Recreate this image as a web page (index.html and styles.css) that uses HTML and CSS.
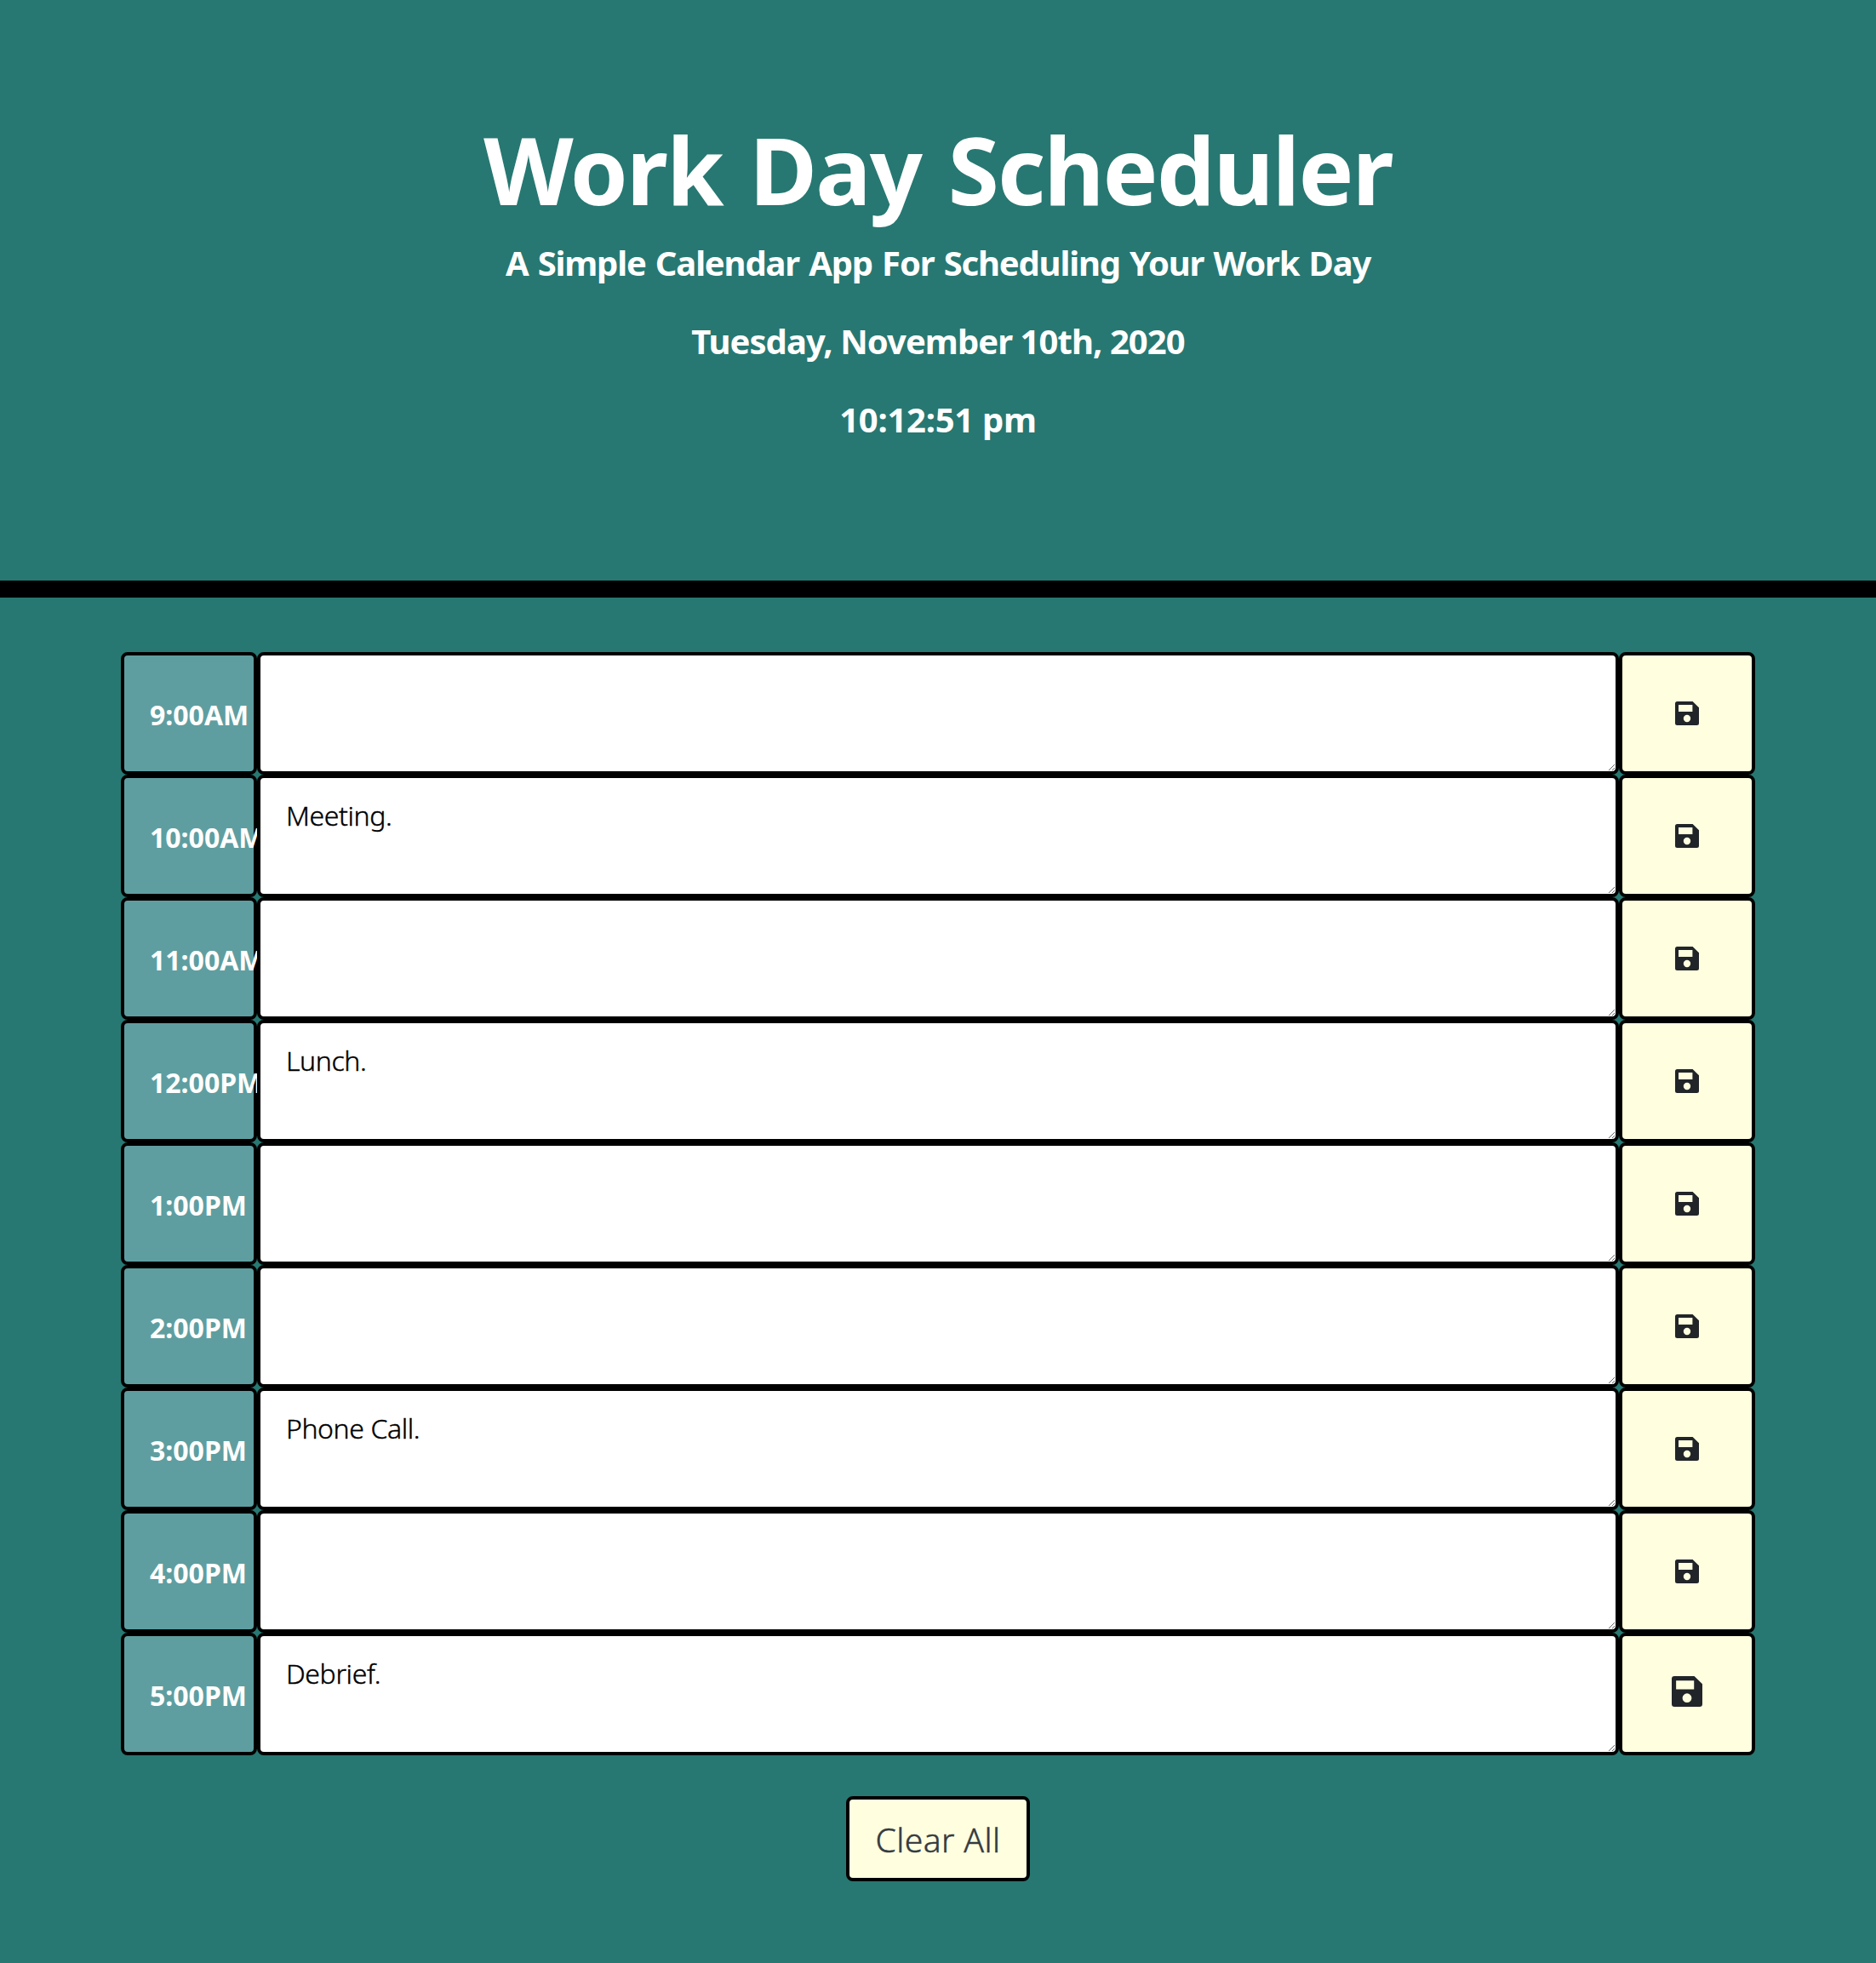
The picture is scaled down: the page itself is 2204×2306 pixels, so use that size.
FILE: index.html
```
<!DOCTYPE html>
<html lang="en">
<head>
<meta charset="utf-8">
<title>Work Day Scheduler</title>
<link rel="stylesheet" href="styles.css">
</head>
<body>
<svg class="sprite" aria-hidden="true">
  <symbol id="save" viewBox="0 0 28 28">
    <path fill-rule="evenodd" d="M2.5 0H20.6L28 7.2V25.5A2.5 2.5 0 0 1 25.5 28H2.5A2.5 2.5 0 0 1 0 25.5V2.5A2.5 2.5 0 0 1 2.5 0ZM4 4V12H20.4V4ZM14 15.8A4.2 4.2 0 1 0 14 24.2A4.2 4.2 0 1 0 14 15.8Z"/>
  </symbol>
</svg>
<header class="jumbotron">
  <h1 class="title">Work Day Scheduler</h1>
  <p class="lead">A Simple Calendar App For Scheduling Your Work Day</p>
  <p class="lead date">Tuesday, November 10th, 2020</p>
  <p class="lead clock">10:12:51 pm</p>
</header>
<main class="planner">
  <div class="row"><div class="hour">9:00AM</div><textarea class="note" spellcheck="false"></textarea><button class="save"><svg class="icon"><use href="#save"/></svg></button></div>
  <div class="row"><div class="hour">10:00AM</div><textarea class="note" spellcheck="false">Meeting.</textarea><button class="save"><svg class="icon"><use href="#save"/></svg></button></div>
  <div class="row"><div class="hour">11:00AM</div><textarea class="note" spellcheck="false"></textarea><button class="save"><svg class="icon"><use href="#save"/></svg></button></div>
  <div class="row"><div class="hour">12:00PM</div><textarea class="note" spellcheck="false">Lunch.</textarea><button class="save"><svg class="icon"><use href="#save"/></svg></button></div>
  <div class="row"><div class="hour">1:00PM</div><textarea class="note" spellcheck="false"></textarea><button class="save"><svg class="icon"><use href="#save"/></svg></button></div>
  <div class="row"><div class="hour">2:00PM</div><textarea class="note" spellcheck="false"></textarea><button class="save"><svg class="icon"><use href="#save"/></svg></button></div>
  <div class="row"><div class="hour">3:00PM</div><textarea class="note" spellcheck="false">Phone Call.</textarea><button class="save"><svg class="icon"><use href="#save"/></svg></button></div>
  <div class="row"><div class="hour">4:00PM</div><textarea class="note" spellcheck="false"></textarea><button class="save"><svg class="icon"><use href="#save"/></svg></button></div>
  <div class="row"><div class="hour">5:00PM</div><textarea class="note" spellcheck="false">Debrief.</textarea><button class="save active"><svg class="icon"><use href="#save"/></svg></button></div>
</main>
<button class="clear">Clear All</button>
</body>
</html>
```
FILE: styles.css
```
* { box-sizing: border-box; }
body {
  margin: 0;
  min-height: 2306px;
  display: flex;
  flex-direction: column;
  background: #277872;
  font-family: "Segoe UI", "Noto Sans", sans-serif;
}
.sprite { display: none; }
.jumbotron {
  height: 702px;
  padding-top: 132px;
  border-bottom: 20px solid #000;
  color: #fff;
  text-align: center;
  font-weight: 700;
}
.title {
  margin: 0 0 13px;
  font-size: 109px;
  line-height: 134px;
  letter-spacing: -1.8px;
  word-spacing: 5px;
}
.lead {
  margin: 0 0 32px;
  font-size: 40px;
  line-height: 60px;
  letter-spacing: -1.18px;
  word-spacing: 2px;
}
.date { letter-spacing: -0.94px; word-spacing: 0; }
.clock { letter-spacing: -0.26px; word-spacing: 0; }
.planner {
  width: 1920px;
  margin: 64px auto 48px;
}
.row {
  display: grid;
  grid-template-columns: 160px 1600px 160px;
  height: 144px;
}
.hour, .note, .save, .clear {
  border: 4px solid #000;
  border-radius: 8px;
}
.hour {
  padding: 46px 0 0 30px;
  background: #5f9ea0;
  color: #fff;
  font-size: 32px;
  font-weight: 700;
  line-height: 48px;
  white-space: nowrap;
}
.note {
  width: 100%;
  height: 100%;
  margin: 0;
  padding: 20px 29px 20px 30px;
  background: #fff;
  color: #000;
  font-family: inherit;
  font-size: 32px;
  font-weight: 300;
  line-height: 48px;
  letter-spacing: -0.4px;
  -webkit-text-stroke: 0.4px #000;
  overflow: auto;
  resize: both;
}
.save {
  display: flex;
  align-items: center;
  justify-content: center;
  padding: 0;
  background: #ffffe0;
  color: #212529;
}
.icon {
  width: 28px;
  height: 28px;
  fill: currentColor;
}
.active { padding-bottom: 6px; }
.active .icon { width: 36px; height: 36px; }
.clear {
  align-self: center;
  width: 216px;
  height: 100px;
  padding: 2px 0 0;
  background: #ffffe0;
  color: #343a40;
  font-family: inherit;
  font-size: 39px;
  font-weight: 300;
  line-height: 60px;
  letter-spacing: 0.4px;
  -webkit-text-stroke: 0.5px #343a40;
}
```
